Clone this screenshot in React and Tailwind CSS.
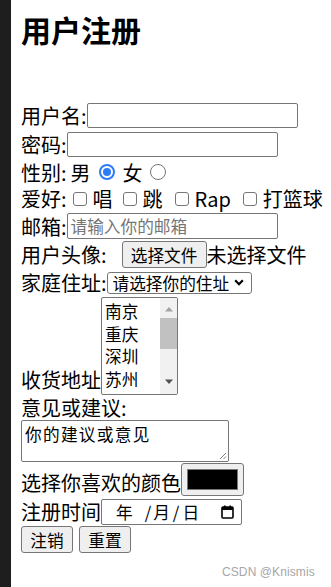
import React from "react";

const F = "font-['Noto_Sans_CJK_SC','Noto_Sans',sans-serif]";

function Radio({ checked }) {
  if (checked) {
    return (
      <span className="block w-[16px] h-[16px] rounded-full border-[2px] border-[#2f7bf5] bg-white flex items-center justify-center shrink-0">
        <span className="block w-[8px] h-[8px] rounded-full bg-[#2f7bf5]" />
      </span>
    );
  }
  return <span className="block w-[16px] h-[16px] rounded-full border border-[#767676] bg-white shrink-0" />;
}

function Check() {
  return <span className="block w-[14px] h-[14px] rounded-[3px] border border-[#767676] bg-white shrink-0" />;
}

export default function App() {
  return (
    <div className={`relative flex min-h-[587px] bg-white text-black ${F}`}>
      <div className="w-[11px] shrink-0 bg-[#1e1e1e]" />
      <div className="pl-[10px] flex flex-col text-[20px] leading-[27px]">
        <div className="mt-[11px] h-[36px] text-[30px] leading-[36px] font-bold">用户注册</div>
        <div className="h-[54px]" />

        {/* 用户名 */}
        <div className="h-[29px] flex items-center">
          <span>用户名:</span>
          <span className="block w-[211px] h-[25px] border border-[#767676] rounded-[2px] bg-white" />
        </div>
        {/* 密码 */}
        <div className="h-[29px] flex items-center">
          <span>密码:</span>
          <span className="block w-[211px] h-[25px] border border-[#767676] rounded-[2px] bg-white" />
        </div>
        {/* 性别 */}
        <div className="h-[26px] flex items-center">
          <span>性别:</span>
          <span className="ml-[4px]">男</span>
          <span className="ml-[8px]"><Radio checked /></span>
          <span className="ml-[8px]">女</span>
          <span className="ml-[7px]"><Radio /></span>
        </div>
        {/* 爱好 */}
        <div className="h-[27px] flex items-center">
          <span>爱好:</span>
          <span className="ml-[6px]"><Check /></span>
          <span className="ml-[6px]">唱</span>
          <span className="ml-[10px]"><Check /></span>
          <span className="ml-[6px]">跳</span>
          <span className="ml-[12px]"><Check /></span>
          <span className="ml-[6px]">Rap</span>
          <span className="ml-[12px]"><Check /></span>
          <span className="ml-[6px]">打篮球</span>
        </div>
        {/* 邮箱 */}
        <div className="h-[28px] flex items-center">
          <span>邮箱:</span>
          <span className="w-[211px] h-[26px] border border-[#767676] rounded-[2px] bg-white flex items-center pl-[3px] text-[16.67px] leading-[20px] text-[#757575]">
            请输入你的邮箱
          </span>
        </div>
        {/* 用户头像 */}
        <div className="h-[29px] flex items-center">
          <span>用户头像:</span>
          <span className="ml-[15px] w-[85px] h-[27px] border border-[#767676] rounded-[3px] bg-[#efefef] flex items-center justify-center text-[16.67px] leading-[20px]">
            选择文件
          </span>
          <span>未选择文件</span>
        </div>
        {/* 家庭住址 */}
        <div className="h-[27px] flex items-center">
          <span>家庭住址:</span>
          <span className="w-[145px] h-[22px] border border-[#767676] rounded-[3px] bg-white flex items-center pl-[5px] pr-[7px] text-[16.67px] leading-[20px]">
            <span className="flex-1">请选择你的住址</span>
            <svg width="10" height="7" viewBox="0 0 10 7" className="shrink-0">
              <polyline points="1.2,1.3 5,5.2 8.8,1.3" fill="none" stroke="#000" strokeWidth="2.2" />
            </svg>
          </span>
        </div>
        {/* 收货地址 */}
        <div className="h-[99px] flex items-end">
          <span className="mb-[2px]">收货地址</span>
          <div className="w-[77px] h-[98px] border border-[#767676] rounded-[2px] bg-white flex overflow-hidden">
            <div className="flex-1 flex flex-col pt-[2px] pl-[3px] text-[16.67px]">
              <span className="h-[22.7px] leading-[22.7px]">南京</span>
              <span className="h-[22.7px] leading-[22.7px]">重庆</span>
              <span className="h-[22.7px] leading-[22.7px]">深圳</span>
              <span className="h-[22.7px] leading-[22.7px]">苏州</span>
            </div>
            <div className="w-[17px] bg-[#f1f1f1] flex flex-col items-center">
              <svg width="10" height="6" viewBox="0 0 10 6" className="mt-[8px]">
                <polygon points="1,5.5 5,1 9,5.5" fill="#a3a3a3" />
              </svg>
              <div className="mt-[6px] w-[17px] h-[31px] bg-[#c1c1c1]" />
              <div className="flex-1" />
              <svg width="10" height="6" viewBox="0 0 10 6" className="mb-[9px]">
                <polygon points="1,0.5 9,0.5 5,5" fill="#505050" />
              </svg>
            </div>
          </div>
        </div>
        {/* 意见或建议 */}
        <div className="h-[25px] flex items-center">
          <span>意见或建议:</span>
        </div>
        <div className="relative w-[208px] h-[42px] border border-[#767676] rounded-[2px] bg-white pl-[3px] pt-[2px] text-[16.67px] leading-[22px] tracking-[1.3px]">
          你的建议或意见
          <svg width="9" height="9" viewBox="0 0 9 9" className="absolute right-[1px] bottom-[1px]">
            <line x1="8" y1="2" x2="2" y2="8" stroke="#808080" strokeWidth="1" />
            <line x1="8" y1="5.5" x2="5.5" y2="8" stroke="#808080" strokeWidth="1" />
          </svg>
        </div>
        {/* 颜色 */}
        <div className="h-[35px] flex items-center">
          <span className="mt-[6px]">选择你喜欢的颜色</span>
          <span className="w-[63px] h-[33px] border border-[#767676] rounded-[3px] bg-[#efefef] flex items-center justify-center">
            <span className="block w-[51px] h-[21px] bg-black border border-[#777]" />
          </span>
        </div>
        {/* 注册时间 */}
        <div className="h-[29px] flex items-center">
          <span>注册时间</span>
          <span className="w-[141px] h-[26px] border border-[#767676] rounded-[2px] bg-white flex items-center pl-[14px] pr-[7px] text-[16.67px] leading-[20px]">
            <span className="flex-1 flex items-center">
              <span>年</span>
              <span className="ml-[12px]">/</span>
              <span className="ml-[2px]">月</span>
              <span className="ml-[3px]">/</span>
              <span className="ml-[3px]">日</span>
            </span>
            <svg width="13" height="14" viewBox="0 0 13 14" className="shrink-0">
              <rect x="1" y="2" width="11" height="11" rx="1" fill="none" stroke="#000" strokeWidth="1.6" />
              <rect x="1" y="2" width="11" height="3" fill="#000" />
              <rect x="3" y="0.5" width="1.6" height="3" fill="#000" />
              <rect x="8.4" y="0.5" width="1.6" height="3" fill="#000" />
            </svg>
          </span>
        </div>
        {/* 按钮 */}
        <div className="h-[28px] flex items-start gap-[6px]">
          <span className="w-[52px] h-[27px] border border-[#767676] rounded-[3px] bg-[#efefef] flex items-center justify-center text-[16.67px] leading-[20px]">注销</span>
          <span className="w-[52px] h-[27px] border border-[#767676] rounded-[3px] bg-[#efefef] flex items-center justify-center text-[16.67px] leading-[20px]">重置</span>
        </div>
      </div>
      <div className="absolute left-[222px] top-[564px] text-[12px] leading-[16px] text-[#a6a6a6] font-['Liberation_Sans',sans-serif] tracking-[0.1px]">
        CSDN @Knismis
      </div>
    </div>
  );
}
